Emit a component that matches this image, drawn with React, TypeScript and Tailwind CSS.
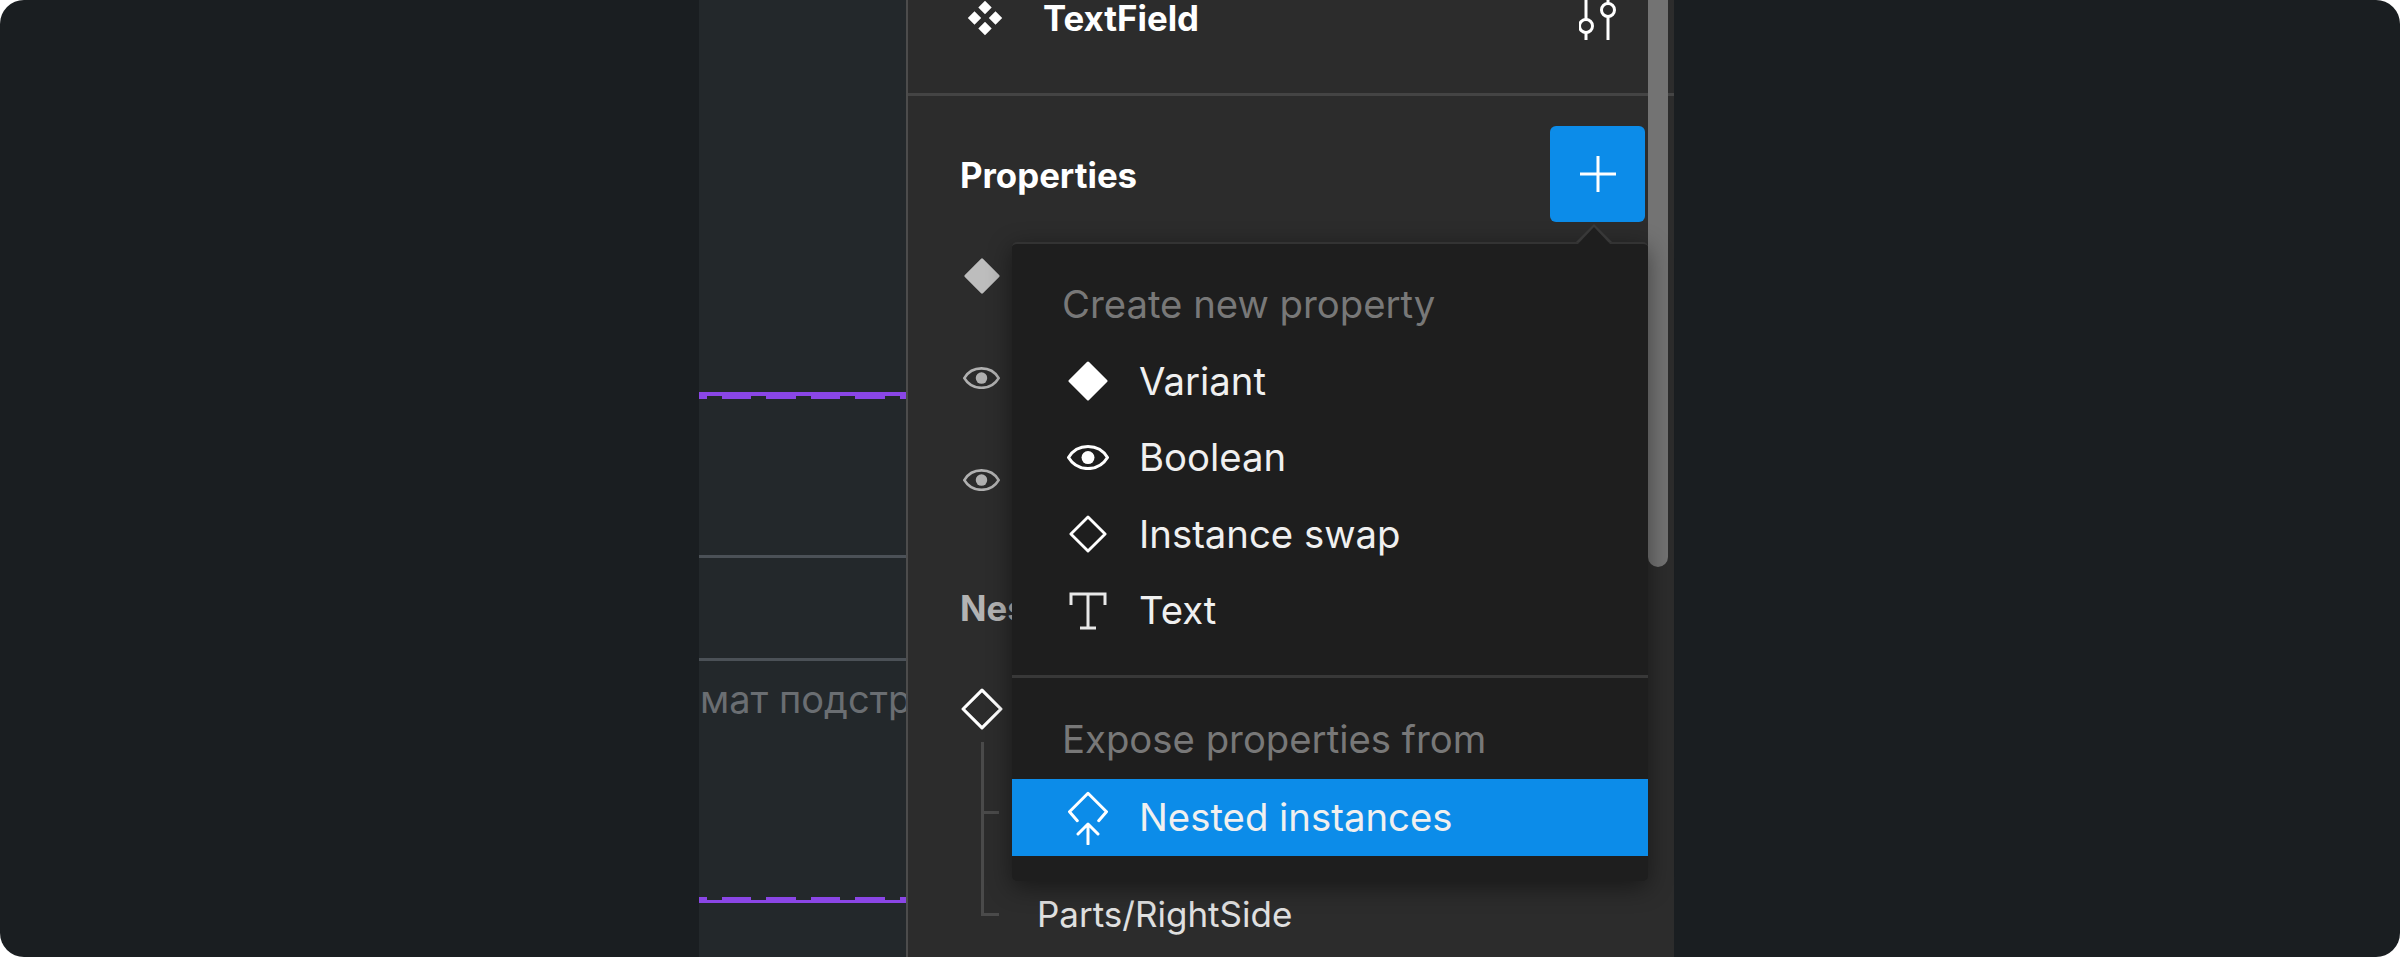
const sans = "font-['Inter',sans-serif]";

function Row({ icon, label, active }: { icon: React.ReactNode; label: string; active?: boolean }) {
  return (
    <div className={`flex h-[76.5px] items-center pl-[58px] text-[38.3px] ${active ? "bg-[#0c8ce9]" : ""} text-[#f0f0f0]`}>
      <div className="flex w-[36px] justify-center">{icon}</div>
      <span className="ml-[33px]">{label}</span>
    </div>
  );
}

const Diamond = ({ fill, size = 40, color = "#fff" }: { fill?: boolean; size?: number; color?: string }) => (
  <svg width={size} height={size} viewBox="0 0 40 40" className="shrink-0">
    <path d="M20 2 38 20 20 38 2 20Z" fill={fill ? color : "none"} stroke={color} strokeWidth="3" strokeLinejoin="round" />
  </svg>
);

const Eye = ({ size = 42, color = "#fff" }: { size?: number; color?: string }) => (
  <svg width={size} height={size * 0.6} viewBox="0 0 42 25" fill="none" className="shrink-0">
    <path d="M1.5 12.5C6 5 13 1.5 21 1.5S36 5 40.5 12.5C36 20 29 23.5 21 23.5S6 20 1.5 12.5Z" stroke={color} strokeWidth="3" />
    <circle cx="21" cy="12.5" r="6.5" fill={color} />
  </svg>
);

const dashes =
  "bg-[repeating-linear-gradient(90deg,#8a46e6_0,#8a46e6_7.7px,transparent_7.7px,transparent_22.7px,#8a46e6_22.7px,#8a46e6_44.5px)]";

export default function App() {
  return (
    <div className={`flex h-[957px] w-[2400px] overflow-hidden bg-white ${sans}`}>
      <div className="flex h-full w-full overflow-hidden rounded-[24px] bg-[#1a1e21]">
        <div className="w-[699px] shrink-0" />
        <div className="h-full w-[207px] shrink-0 overflow-hidden bg-[#23282b]">
          <div className="h-[392px]" />
          <div className="h-[4px] bg-[#8a46e6]" />
          <div className={`h-[3px] ${dashes}`} />
          <div className="h-[156px]" />
          <div className="h-[3px] bg-[#4b5157]" />
          <div className="h-[100px]" />
          <div className="h-[3px] bg-[#4b5157]" />
          <div className="mt-[15px] h-[46px] whitespace-nowrap pl-[1px] text-[38px] leading-[46px] text-[#6a6e72]">мат подстр</div>
          <div className="h-[175px]" />
          <div className={`h-[3px] ${dashes}`} />
          <div className="h-[3px] bg-[#8a46e6]" />
        </div>
        <div className="relative h-full w-[768px] shrink-0 border-l-[2px] border-[#4c4c4c] bg-[#2c2c2c]">
          <div className="flex h-[96px] items-start border-b-[3px] border-[#444444] pl-[59px] pr-[55px]">
            <svg width="36" height="36" viewBox="0 0 36 36" fill="#fff">
              <path d="M18 .8 24.7 7.5 18 14.2 11.3 7.5ZM7.5 11.3 14.2 18 7.5 24.7 .8 18ZM28.5 11.3 35.2 18 28.5 24.7 21.8 18ZM18 21.8 24.7 28.5 18 35.2 11.3 28.5Z" />
            </svg>
            <span className="ml-[40px] text-[34.8px] font-bold leading-[37px] text-white">TextField</span>
            <svg width="40" height="44" viewBox="0 0 40 44" className="ml-auto" fill="none" stroke="#fff" strokeWidth="3">
              <path d="M7 0V19.5M7 32.5V40M29 0V3.5M29 16.5V40" />
              <circle cx="7" cy="26" r="6.5" />
              <circle cx="29" cy="10" r="6.5" />
            </svg>
          </div>
          <div className="flex h-[158px] items-center pl-[52px]">
            <span className="text-[34.8px] font-bold text-white">Properties</span>
          </div>
          <div className="pl-[55px]">
            <div className="ml-[1px] pt-[4px]"><Diamond fill size={36} color="#bdbdbd" /></div>
            <div className="pt-[73px]"><Eye size={37} color="#b0b0b0" /></div>
            <div className="pt-[80px]"><Eye size={37} color="#b0b0b0" /></div>
          </div>
          <div className="mt-[97px] pl-[52px] text-[34.8px] font-bold leading-[40px] text-[#b3b3b3]">Nested</div>
          <div className="mt-[60px] pl-[53px]"><Diamond size={42} /></div>
          <div className="relative ml-[73px] mt-[12px] h-[174px] w-[18px] border-b-[3px] border-l-[3px] border-[#4a4a4a]">
            <div className="h-[72px] w-[15px] border-b-[3px] border-[#4a4a4a]" />
            <span className="absolute left-[53px] top-[152px] whitespace-nowrap text-[35px] leading-[40px] text-[#e0e0e0]">Parts/RightSide</span>
          </div>

          <div className="absolute left-[740px] top-0 h-[567px] w-[20px] rounded-b-[10px] bg-[#737373]" />

          <div className="absolute left-[642px] top-[126px] flex h-[96px] w-[95px] items-center justify-center rounded-[6px] bg-[#0c8ce9]">
            <svg width="36" height="36" viewBox="0 0 36 36" stroke="#fff" strokeWidth="3"><path d="M18 0V36M0 18H36" /></svg>
          </div>

          <div className="absolute left-[104px] top-[242px] h-[639px] w-[636px] rounded-[5px] border-t-[2px] border-[#333] bg-[#1e1e1e] shadow-[0_6px_24px_rgba(0,0,0,0.45)]">
            <div className="absolute left-[564px] top-[-20px] h-0 w-0 border-x-[18px] border-b-[18px] border-x-transparent border-b-[#383838]" />
            <div className="absolute left-[566px] top-[-17px] h-0 w-0 border-x-[16px] border-b-[17px] border-x-transparent border-b-[#1e1e1e]" />
            <div className="h-[31px]" />
            <div className="mb-[8px] flex h-[60px] items-center pl-[50px] text-[38.3px] text-[#787878]">Create new property</div>
            <Row icon={<Diamond fill size={40} />} label="Variant" />
            <Row icon={<Eye />} label="Boolean" />
            <Row icon={<Diamond size={38} />} label="Instance swap" />
            <Row
              icon={
                <svg width="38" height="38" viewBox="0 0 38 38" fill="none" stroke="#e8e8e8" strokeWidth="3" className="shrink-0">
                  <path d="M2 13V2H36V13M19 2V36M11 36H27" />
                </svg>
              }
              label="Text"
            />
            <div className="mt-[26px] h-[3px] bg-[#383838]" />
            <div className="flex h-[101px] items-center pl-[50px] pt-[22px] text-[38.3px] text-[#787878]">Expose properties from</div>
            <Row
              active
              icon={
                <svg width="40" height="54" viewBox="0 0 40 54" fill="none" stroke="#fff" strokeWidth="3" strokeLinecap="round" strokeLinejoin="round" className="mt-[1px] shrink-0">
                  <path d="M9.3 29.7 1.5 20.7 20 2.3 38.5 20.7 30.7 29.7" />
                  <path d="M20 53V34M10 43 20 33 30 43" />
                </svg>
              }
              label="Nested instances"
            />
          </div>
        </div>
      </div>
    </div>
  );
}
